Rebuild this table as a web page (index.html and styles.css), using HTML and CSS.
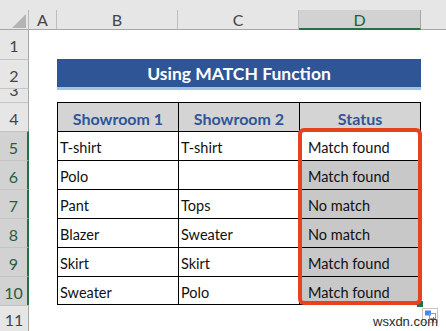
FILE: index.html
```html
<!DOCTYPE html>
<html>
<head>
<meta charset="utf-8">
<link rel="stylesheet" href="styles.css">
</head>
<body>
<div class="sheet">
  <div class="strip"></div>
  <div class="corner"><svg width="29" height="20" viewBox="0 0 29 20"><polygon points="12,18 26,18 26,4" fill="#b4b4b4"/></svg></div>
  <div class="ch">A</div>
  <div class="ch">B</div>
  <div class="ch">C</div>
  <div class="ch sel">D</div>
  <div class="ch end"></div>

  <div class="rh first">1</div>
  <div class="blank wide"></div>

  <div class="rh">2</div>
  <div class="blank"></div>
  <div class="title">Using MATCH Function</div>
  <div class="blank"></div>

  <div class="rh r3"><span>3</span></div>
  <div class="blank wide"></div>

  <div class="rh">4</div>
  <div class="blank"></div>
  <div class="th">Showroom 1</div>
  <div class="th">Showroom 2</div>
  <div class="th last">Status</div>
  <div class="blank"></div>

  <div class="rh sel">5</div>
  <div class="blank"></div>
  <div class="td">T-shirt</div>
  <div class="td">T-shirt</div>
  <div class="td st active">Match found</div>
  <div class="blank"></div>

  <div class="rh sel">6</div>
  <div class="blank"></div>
  <div class="td">Polo</div>
  <div class="td"></div>
  <div class="td st">Match found</div>
  <div class="blank"></div>

  <div class="rh sel">7</div>
  <div class="blank"></div>
  <div class="td">Pant</div>
  <div class="td">Tops</div>
  <div class="td st">No match</div>
  <div class="blank"></div>

  <div class="rh sel">8</div>
  <div class="blank"></div>
  <div class="td">Blazer</div>
  <div class="td">Sweater</div>
  <div class="td st">No match</div>
  <div class="blank"></div>

  <div class="rh sel">9</div>
  <div class="blank"></div>
  <div class="td">Skirt</div>
  <div class="td">Skirt</div>
  <div class="td st">Match found</div>
  <div class="blank"></div>

  <div class="rh sel">10</div>
  <div class="blank"></div>
  <div class="td bottom">Sweater</div>
  <div class="td bottom">Polo</div>
  <div class="td st bottom">Match found</div>
  <div class="blank"></div>

  <div class="rh">11</div>
  <div class="blank wide"></div>

  <div class="handle"></div>
  <div class="highlight"></div>
  <div class="paste"><svg width="14" height="13" viewBox="0 0 14 13"><rect x="2" y="1.5" width="6" height="5" fill="#4a86e8"/><rect x="6.5" y="4.5" width="6" height="5" fill="none" stroke="#9a9a9a"/><path d="M10.5 8v5M8 10.5h5" stroke="#777" stroke-width="1"/></svg></div>
  <div class="watermark">wsxdn.com</div>
</div>
</body>
</html>
```
FILE: styles.css
```css
* { box-sizing: border-box; }
html, body { margin: 0; padding: 0; }
body {
  width: 446px;
  height: 331px;
  overflow: hidden;
  background: #ffffff;
  font-family: Lato, "Open Sans", sans-serif;
}
.sheet {
  position: relative;
  display: grid;
  grid-template-columns: 29px 28px 121px 121px 122px 1fr;
  grid-template-rows: 10px 20px 29px 29px 14px repeat(7, 29px) 1fr;
  height: 331px;
  overflow: hidden;
}
.strip { grid-column: 1 / -1; background: #e6e6e6; }
.corner {
  background: #e6e6e6;
  border-right: 1px solid #b9b9b9;
  border-bottom: 1px solid #a6a6a6;
  overflow: hidden;
}
.corner svg { display: block; }
.ch {
  background: #e6e6e6;
  border-right: 1px solid #bdbdbd;
  border-bottom: 1px solid #a6a6a6;
  color: #444444;
  font-size: 16px;
  line-height: 19px;
  text-align: center;
}
.ch.sel {
  background: #d2d2d2;
  border-bottom: 2px solid #217346;
  border-right-color: #a6a6a6;
  color: #1f5f3b;
}
.ch.end { border-right: 0; }
.rh {
  background: #e6e6e6;
  border-right: 1px solid #a6a6a6;
  border-top: 1px solid #c4c4c4;
  color: #444444;
  font-size: 16px;
  display: flex;
  align-items: center;
  justify-content: center;
  padding-top: 2px;
}
.rh.first { border-top: 0; }
.rh.sel {
  background: #d2d2d2;
  border-right: 2px solid #217346;
  color: #2a5c40;
}
.rh.r3 {
  align-items: flex-start;
  overflow: hidden;
  padding-top: 0;
}
.rh.r3 span { line-height: 15px; margin-top: -7px; }
.blank { background: #ffffff; }
.blank.wide { grid-column: 2 / -1; }
.title {
  grid-column: 3 / 6;
  align-self: start;
  height: 31px;
  background: #2f5597;
  border-bottom: 3px solid #9dc3e6;
  color: #ffffff;
  font-weight: 700;
  font-size: 17.5px;
  display: flex;
  align-items: center;
  justify-content: center;
  padding-top: 1px;
  position: relative;
  z-index: 1;
}
.th {
  background: #d4d4d4;
  border-left: 1px solid #000;
  border-top: 1px solid #000;
  color: #2f5597;
  font-weight: 700;
  font-size: 16px;
  display: flex;
  align-items: center;
  justify-content: center;
  padding-top: 3px;
}
.th.last, .td.st { border-right: 1px solid #000; }
.td {
  background: #ffffff;
  border-left: 1px solid #000;
  border-top: 1px solid #000;
  color: #111111;
  font-size: 14.5px;
  display: flex;
  align-items: center;
  padding: 3px 0 0 2px;
}
.td.st { background: #c8c8c8; padding-left: 8px; }
.td.st.active { background: #ffffff; }
.td.bottom { border-bottom: 1px solid #000; }
.handle {
  position: absolute;
  left: 417px;
  top: 301px;
  width: 6px;
  height: 6px;
  background: #217346;
}
.highlight {
  position: absolute;
  left: 298px;
  top: 128px;
  width: 124px;
  height: 177px;
  border: 4px solid #e5431f;
  border-radius: 6px;
}
.paste {
  position: absolute;
  left: 422px;
  top: 308px;
  width: 16px;
  height: 15px;
  border: 1px solid #c6c6c6;
  background: #ffffff;
}
.paste svg { display: block; }
.watermark {
  position: absolute;
  left: 373px;
  top: 314px;
  font-family: "Liberation Sans", Arial, sans-serif;
  font-size: 13px;
  color: #2a2a2a;
}
```
